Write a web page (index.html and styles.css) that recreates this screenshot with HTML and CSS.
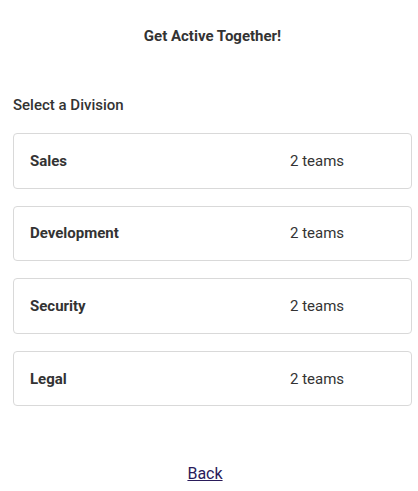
FILE: index.html
```html
<!DOCTYPE html>
<html>
<head>
<meta charset="utf-8">
<link rel="stylesheet" href="styles.css">
</head>
<body>
<div class="page">
  <h1 class="title">Get Active Together!</h1>
  <h2 class="label">Select a Division</h2>
  <div class="list">
    <div class="card"><span class="name">Sales</span><span class="count">2 teams</span></div>
    <div class="card"><span class="name">Development</span><span class="count">2 teams</span></div>
    <div class="card"><span class="name">Security</span><span class="count">2 teams</span></div>
    <div class="card"><span class="name">Legal</span><span class="count">2 teams</span></div>
  </div>
  <div class="footer"><a class="back" href="#">Back</a></div>
</div>
</body>
</html>
```
FILE: styles.css
```css
html, body {
  margin: 0;
  padding: 0;
  background: #fff;
}
body {
  font-family: Roboto, "Liberation Sans", sans-serif;
  color: #333;
}
.page {
  padding: 0 6px 0 13px;
  display: flex;
  flex-direction: column;
}
.title {
  margin: 27px 0 0 0;
  font-size: 15px;
  font-weight: 700;
  line-height: 18px;
  text-align: center;
}
.label {
  margin: 51px 0 0 0;
  font-size: 15px;
  font-weight: 500;
  line-height: 18px;
}
.list {
  margin-top: 19px;
  display: flex;
  flex-direction: column;
  gap: 17px;
}
.card {
  box-sizing: border-box;
  height: 55.6px;
  border: 1px solid #d9d9d9;
  border-radius: 4px;
  padding: 0 16px;
  display: grid;
  grid-template-columns: 260px 1fr;
  align-items: center;
}
.name {
  font-size: 15px;
  font-weight: 700;
}
.count {
  font-size: 15px;
  font-weight: 400;
}
.footer {
  margin-top: 58px;
  text-align: center;
  padding-right: 15px;
}
.back {
  font-size: 16px;
  color: #2a1b5a;
  text-decoration: underline;
}
```
